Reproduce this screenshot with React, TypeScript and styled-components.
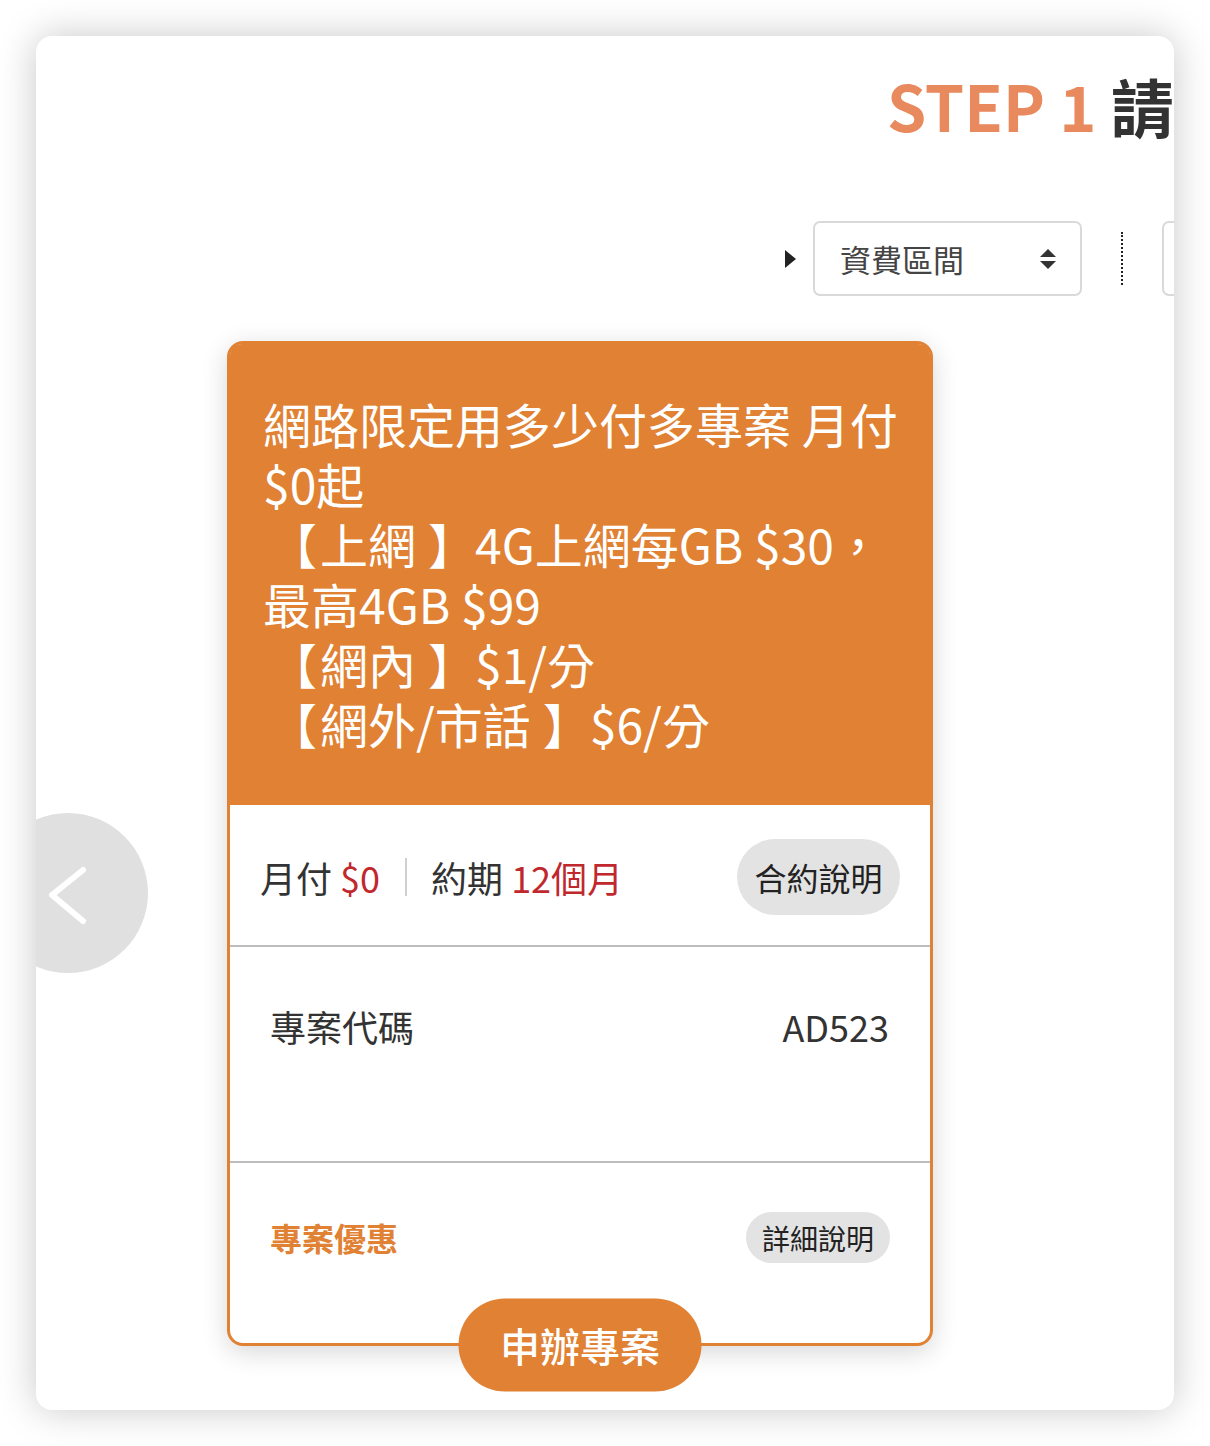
import React from "react";
import styled, { createGlobalStyle } from "styled-components";

const Global = createGlobalStyle`
  html, body { margin: 0; padding: 0; background: #fff; }
  body { font-family: "Noto Sans CJK TC", "Noto Sans", sans-serif; color: #333; }
  * { box-sizing: border-box; }
`;

const ORANGE = "#e08133";
const RED = "#c0282d";

const Page = styled.div`
  padding: 36px;
`;

const Sheet = styled.div`
  position: relative;
  height: 1374px;
  background: #fff;
  border-radius: 16px;
  overflow: hidden;
  box-shadow: 0 0 38px rgba(0, 0, 0, 0.22);
  display: flex;
  flex-direction: column;
`;

const Title = styled.h1`
  margin: 29px 0 0 0;
  padding-left: 851px;
  font-size: 63px;
  line-height: 80px;
  font-weight: 700;
  white-space: nowrap;
  color: #333;
`;

const Step = styled.span`
  color: #e8895e;
`;

const FilterRow = styled.div`
  margin-top: 76px;
  padding-left: 749px;
  display: flex;
  align-items: center;
  height: 75px;
`;

const Arrow = styled.span`
  flex-shrink: 0;
  width: 0;
  height: 0;
  border-top: 9px solid transparent;
  border-bottom: 9px solid transparent;
  border-left: 11px solid #222;
  margin-right: 17px;
`;

const SelectBox = styled.div`
  flex-shrink: 0;
  width: 269px;
  height: 75px;
  border: 2px solid #d9d9d9;
  border-radius: 7px;
  display: flex;
  align-items: center;
  justify-content: space-between;
  padding: 0 24px 0 25px;
  font-size: 31px;
  color: #444;
  white-space: nowrap;
`;

const DottedSep = styled.span`
  flex-shrink: 0;
  height: 53px;
  border-left: 2px dotted #222;
  margin: 0 39px 0 39px;
`;

const PlanCard = styled.div`
  position: relative;
  margin: 45px 0 0 191px;
  width: 706px;
  height: 1005px;
  border: 3px solid ${ORANGE};
  border-radius: 16px;
  background: #fff;
  box-shadow: 0 6px 26px rgba(0, 0, 0, 0.16);
  display: flex;
  flex-direction: column;
`;

const PlanHeader = styled.div`
  flex: none;
  height: 461px;
  background: ${ORANGE};
  border-radius: 12px 12px 0 0;
  padding: 49px 20px 0 33px;
  color: #fff;
  font-size: 48px;
  line-height: 60px;
  white-space: nowrap;
`;

const OpenBracket = styled.span`
  display: inline-block;
  width: 57px;
  padding-left: 6px;
`;

const CloseBracket = styled.span`
  display: inline-block;
  width: 59px;
  padding-left: 12px;
`;

const Row = styled.div<{ $h: number; $pt?: number; $align?: string; $last?: boolean }>`
  flex: none;
  height: ${(p) => p.$h}px;
  padding: ${(p) => p.$pt ?? 0}px 30px 0 30px;
  display: flex;
  align-items: ${(p) => p.$align ?? "center"};
  justify-content: space-between;
  border-bottom: ${(p) => (p.$last ? "none" : "2px solid #bdbdbd")};
`;

const Inline = styled.div`
  display: flex;
  align-items: center;
  font-size: 36px;
  color: #333;
  white-space: nowrap;
`;

const Red = styled.span`
  color: ${RED};
`;

const VSep = styled.span`
  width: 2px;
  height: 38px;
  background: #d0d0d0;
  margin: 0 24px 0 25px;
`;

const Pill = styled.span<{ $w: number; $h: number; $fs: number }>`
  display: inline-flex;
  align-items: center;
  justify-content: center;
  width: ${(p) => p.$w}px;
  height: ${(p) => p.$h}px;
  border-radius: ${(p) => p.$h / 2}px;
  background: #e3e3e3;
  color: #222;
  font-size: ${(p) => p.$fs}px;
  white-space: nowrap;
`;

const CodeLabel = styled.span`
  font-size: 36px;
  line-height: 44px;
  color: #333;
  padding-left: 10px;
`;

const CodeValue = styled.span`
  font-size: 36px;
  line-height: 44px;
  color: #333;
  padding-right: 11px;
`;

const PromoLabel = styled.span`
  font-size: 32px;
  line-height: 51px;
  font-weight: 700;
  color: ${ORANGE};
  padding-left: 10px;
`;

const PromoWrap = styled.span`
  padding-right: 10px;
`;

const ApplyButton = styled.button`
  position: absolute;
  left: 50%;
  bottom: 0;
  transform: translate(-50%, 50%);
  margin-bottom: -1.5px;
  width: 243px;
  height: 93px;
  border: none;
  border-radius: 47px;
  background: ${ORANGE};
  color: #fff;
  font-family: "Noto Sans CJK TC", sans-serif;
  font-size: 40px;
  font-weight: 500;
  cursor: pointer;
`;

const PrevButton = styled.button`
  position: absolute;
  left: -48px;
  top: 777px;
  width: 160px;
  height: 160px;
  border-radius: 50%;
  border: none;
  background: #e0e0e0;
  padding: 0;
  display: block;
`;

const SortIcon = () => (
  <svg width="16" height="20" viewBox="0 0 16 20">
    <polygon points="8,0 16,8 0,8" fill="#333" />
    <polygon points="0,12 16,12 8,20" fill="#333" />
  </svg>
);

const Tag = ({ children }: { children: React.ReactNode }) => (
  <>
    <OpenBracket>【</OpenBracket>
    {children}
    <CloseBracket>】</CloseBracket>
  </>
);

export default function App() {
  return (
    <>
      <Global />
      <Page>
        <Sheet>
          <Title>
            <Step>STEP 1</Step> 請選擇您想要的資費方案
          </Title>
          <FilterRow>
            <Arrow />
            <SelectBox>
              <span>資費區間</span>
              <SortIcon />
            </SelectBox>
            <DottedSep />
            <SelectBox>
              <span>合約期間</span>
              <SortIcon />
            </SelectBox>
          </FilterRow>
          <PlanCard>
            <PlanHeader>
              網路限定用多少付多專案 月付
              <br />
              $0起
              <br />
              <Tag>上網</Tag>4G上網每GB $30，
              <br />
              最高4GB $99
              <br />
              <Tag>網內</Tag>$1/分
              <br />
              <Tag>網外/市話</Tag>$6/分
            </PlanHeader>
            <Row $h={142} $pt={4}>
              <Inline>
                月付&nbsp;<Red>$0</Red>
                <VSep />
                約期&nbsp;<Red>12個月</Red>
              </Inline>
              <Pill $w={163} $h={76} $fs={32}>
                合約說明
              </Pill>
            </Row>
            <Row $h={216} $pt={57} $align="flex-start">
              <CodeLabel>專案代碼</CodeLabel>
              <CodeValue>AD523</CodeValue>
            </Row>
            <Row $h={180} $pt={49} $align="flex-start" $last>
              <PromoLabel>專案優惠</PromoLabel>
              <PromoWrap>
                <Pill $w={144} $h={51} $fs={28}>
                  詳細說明
                </Pill>
              </PromoWrap>
            </Row>
            <ApplyButton>申辦專案</ApplyButton>
          </PlanCard>
          <PrevButton aria-label="上一個">
            <svg width="160" height="160" viewBox="0 0 160 160">
              <polyline
                points="95,57 64,82 95,108"
                fill="none"
                stroke="#fff"
                strokeWidth="6"
                strokeLinecap="round"
                strokeLinejoin="round"
              />
            </svg>
          </PrevButton>
        </Sheet>
      </Page>
    </>
  );
}
